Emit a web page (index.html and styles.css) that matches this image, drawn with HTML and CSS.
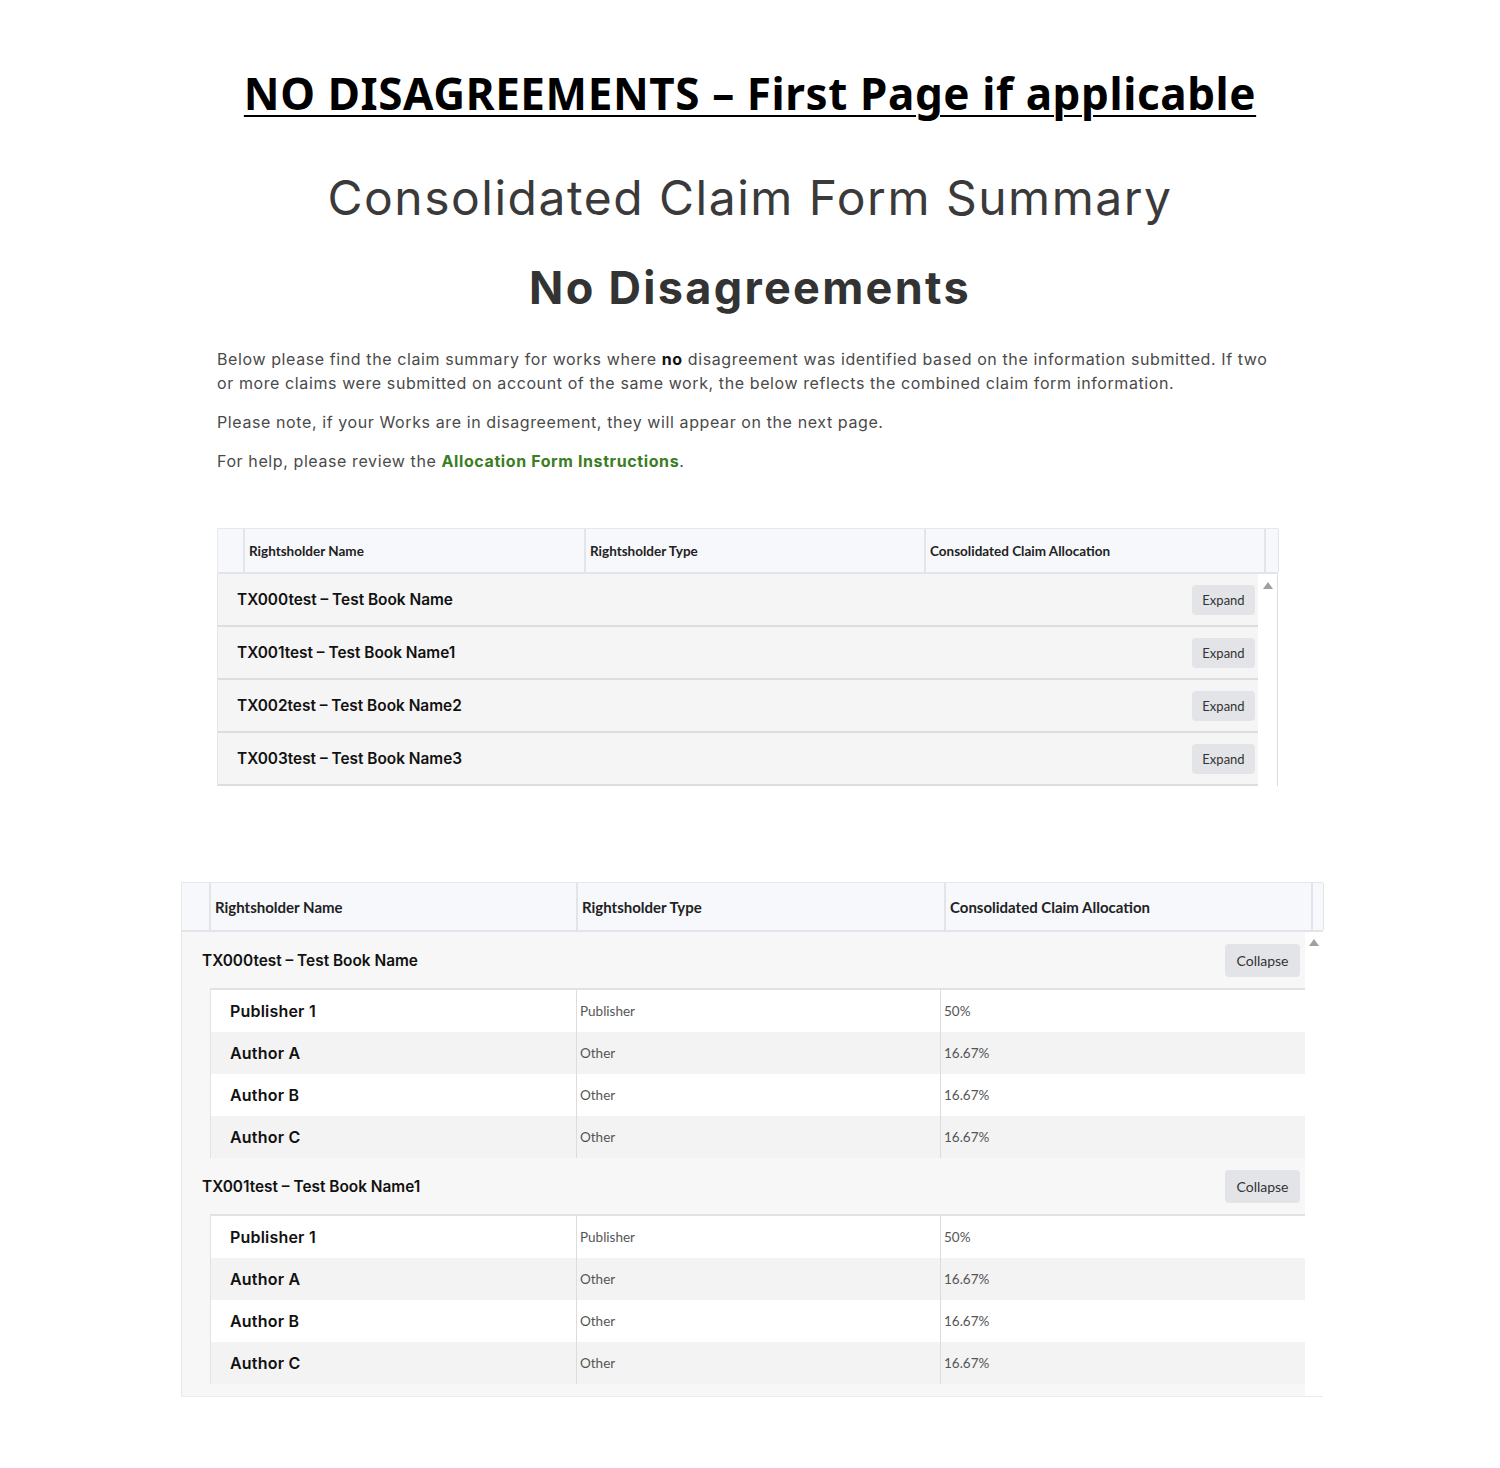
FILE: index.html
```html
<!DOCTYPE html>
<html lang="en">
<head>
<meta charset="utf-8">
<title>No Disagreements – First Page</title>
<link rel="stylesheet" href="styles.css">
</head>
<body>
<h1 class="doc-title">NO DISAGREEMENTS – First Page if applicable</h1>
<h2 class="form-title">Consolidated Claim Form Summary</h2>
<h3 class="section-title">No Disagreements</h3>
<div class="intro">
  <p>Below please find the claim summary for works where <b>no</b> disagreement was identified based on the information submitted. If two<br>or more claims were submitted on account of the same work, the below reflects the combined claim form information.</p>
  <p>Please note, if your Works are in disagreement, they will appear on the next page.</p>
  <p>For help, please review the <a class="link" href="#">Allocation Form Instructions</a>.</p>
</div>

<div class="grid grid-small">
  <div class="grid-head">
    <div class="hcell hcell-gutter"></div>
    <div class="hcell">Rightsholder Name</div>
    <div class="hcell">Rightsholder Type</div>
    <div class="hcell">Consolidated Claim Allocation</div>
    <div class="hcell hcell-end"></div>
  </div>
  <div class="grid-body">
    <div class="rows">
      <div class="work-row"><span class="work-name">TX000test – Test Book Name</span><button class="btn btn-sm">Expand</button></div>
      <div class="work-row"><span class="work-name">TX001test – Test Book Name1</span><button class="btn btn-sm">Expand</button></div>
      <div class="work-row"><span class="work-name">TX002test – Test Book Name2</span><button class="btn btn-sm">Expand</button></div>
      <div class="work-row"><span class="work-name">TX003test – Test Book Name3</span><button class="btn btn-sm">Expand</button></div>
    </div>
    <div class="scroll-track"><span class="arrow-up"></span></div>
  </div>
</div>

<div class="grid grid-large">
  <div class="grid-head">
    <div class="hcell hcell-gutter"></div>
    <div class="hcell">Rightsholder Name</div>
    <div class="hcell">Rightsholder Type</div>
    <div class="hcell">Consolidated Claim Allocation</div>
    <div class="hcell hcell-end"></div>
  </div>
  <div class="grid-body">
    <div class="rows">
      <div class="group">
        <div class="group-row"><span class="work-name">TX000test – Test Book Name</span><button class="btn btn-lg">Collapse</button></div>
        <div class="sub">
          <div class="sub-row"><span class="sub-name">Publisher 1</span><span class="sub-val">Publisher</span><span class="sub-val">50%</span></div>
          <div class="sub-row sub-alt"><span class="sub-name">Author A</span><span class="sub-val">Other</span><span class="sub-val">16.67%</span></div>
          <div class="sub-row"><span class="sub-name">Author B</span><span class="sub-val">Other</span><span class="sub-val">16.67%</span></div>
          <div class="sub-row sub-alt"><span class="sub-name">Author C</span><span class="sub-val">Other</span><span class="sub-val">16.67%</span></div>
        </div>
      </div>
      <div class="group">
        <div class="group-row"><span class="work-name">TX001test – Test Book Name1</span><button class="btn btn-lg">Collapse</button></div>
        <div class="sub">
          <div class="sub-row"><span class="sub-name">Publisher 1</span><span class="sub-val">Publisher</span><span class="sub-val">50%</span></div>
          <div class="sub-row sub-alt"><span class="sub-name">Author A</span><span class="sub-val">Other</span><span class="sub-val">16.67%</span></div>
          <div class="sub-row"><span class="sub-name">Author B</span><span class="sub-val">Other</span><span class="sub-val">16.67%</span></div>
          <div class="sub-row sub-alt"><span class="sub-name">Author C</span><span class="sub-val">Other</span><span class="sub-val">16.67%</span></div>
        </div>
      </div>
      <div class="group">
        <div class="group-row"><span class="work-name"></span><span class="btn btn-lg btn-stub"></span></div>
      </div>
    </div>
    <div class="scroll-track"><span class="arrow-up"></span></div>
  </div>
</div>
</body>
</html>
```
FILE: styles.css
```css
* { box-sizing: border-box; }
html, body { margin: 0; padding: 0; background: #ffffff; }
body { font-family: "Inter", "Noto Sans", sans-serif; color: #333; }

.doc-title {
  margin: 65px 0 0;
  text-align: center;
  font-family: "Noto Sans", sans-serif;
  font-weight: 700;
  font-size: 44px;
  letter-spacing: 0.6px;
  line-height: 56px;
  color: #000;
  text-decoration: underline;
  text-decoration-thickness: 2px;
  text-underline-offset: 5px;
}
.form-title {
  margin: 47px 0 0;
  text-align: center;
  font-family: "Inter", sans-serif;
  font-weight: 400;
  font-size: 48px;
  letter-spacing: 1.5px;
  line-height: 60px;
  color: #3a3a3a;
}
.section-title {
  margin: 32px 0 0;
  text-align: center;
  font-family: "Inter", sans-serif;
  font-weight: 700;
  font-size: 45px;
  letter-spacing: 2.3px;
  line-height: 56px;
  color: #333;
}
.intro {
  margin: 31px 0 0 217px;
  width: 1080px;
  font-family: "Inter", sans-serif;
  font-size: 16px;
  letter-spacing: 0.6px;
  line-height: 24px;
  color: #4a4a4a;
}
.intro p { margin: 0 0 15px; }
.intro p:last-child { margin-bottom: 0; }
.intro b { color: #111; font-weight: 700; }
.link { color: #3a7d22; font-weight: 700; text-decoration: none; }

/* grids */
.grid { font-family: "Lato", "Noto Sans", sans-serif; }
.grid-small { margin: 55px 0 0 217px; width: 1061px; }
.grid-large { margin: 96px 0 0 181px; width: 1142px; }

.grid-head {
  display: grid;
  background: #f6f8fb;
  border-top: 1px solid #e4e7eb;
  border-bottom: 2px solid #e2e4e8;
  border-left: 1px solid #e8eaee;
}
.grid-small .grid-head { grid-template-columns: 27px 341px 340px 340px 13px; height: 46px; }
.grid-large .grid-head { grid-template-columns: 29px 367px 368px 367px 11px; height: 50px; }
.hcell {
  border-right: 2px solid #e2e4e8;
  display: flex;
  align-items: center;
  padding-left: 4px;
  font-weight: 700;
  color: #222;
}
.grid-small .hcell { font-size: 13.5px; }
.grid-large .hcell { font-size: 15px; }
.hcell-gutter { padding: 0; }
.hcell-end { padding: 0; border-right: 1px solid #e2e4e8; }

.grid-body { display: flex; }
.rows { flex: 1; }
.scroll-track {
  display: flex;
  justify-content: center;
  padding-top: 8px;
  background: #fff;
}
.grid-small .scroll-track { width: 20px; border-right: 1px solid #dcdcdc; }
.grid-large .scroll-track { width: 18px; padding-top: 7px; }
.arrow-up {
  width: 0; height: 0;
  border-left: 5px solid transparent;
  border-right: 5px solid transparent;
  border-bottom: 7px solid #a0a0a0;
}

.work-name {
  font-family: "Inter", "Noto Sans", sans-serif;
  font-weight: 600;
  font-size: 15.4px;
  color: #111;
}
.work-row {
  height: 53px;
  background: #f5f5f5;
  border-bottom: 2px solid #dddddd;
  border-left: 1px solid #e6e6e6;
  display: flex;
  align-items: center;
  justify-content: space-between;
  padding: 0 3px 0 19px;
}
.btn {
  border: none;
  border-radius: 4px;
  background: #e2e4e8;
  color: #333;
  font-family: "Lato", "Noto Sans", sans-serif;
  padding: 0;
}
.btn-sm { width: 63px; height: 30px; font-size: 13px; }
.btn-lg { width: 75px; height: 33px; font-size: 14px; }
.btn-stub { display: block; }

/* large grid */
.grid-large .grid-body { height: 465px; overflow: hidden; border-bottom: 1px solid #ececec; }
.group { background: #f7f7f7; border-left: 1px solid #e6e6e6; }
.group-row {
  height: 56px;
  display: flex;
  align-items: center;
  justify-content: space-between;
  padding: 0 5px 0 20px;
}
.sub {
  margin-left: 28px;
  border-top: 2px solid #e2e2e2;
  border-left: 1px solid #e2e2e2;
}
.sub-row {
  display: grid;
  grid-template-columns: 365px 364px 1fr;
  height: 42px;
  background: #ffffff;
}
.sub-alt { background: #f3f3f3; }
.sub-row > span { display: flex; align-items: center; }
.sub-name {
  padding-left: 19px;
  font-family: "Inter", "Noto Sans", sans-serif;
  font-weight: 600;
  font-size: 16px;
  letter-spacing: 0.2px;
  color: #111;
}
.sub-val {
  border-left: 1px solid #dcdcdc;
  padding-left: 3px;
  font-size: 13.5px;
  color: #555;
}
```
